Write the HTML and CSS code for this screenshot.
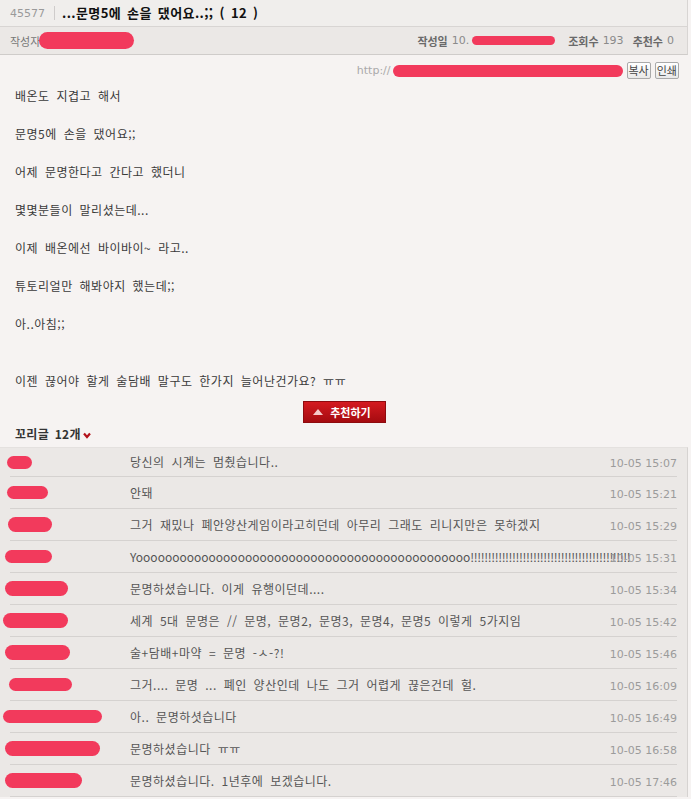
FILE: index.html
```html
<!DOCTYPE html>
<html lang="ko">
<head>
<meta charset="utf-8">
<title>...문명5에 손을 댔어요..;;</title>
<link rel="stylesheet" href="styles.css">
</head>
<body>
<div class="post">
  <div class="title-bar">
    <span class="num">45577</span>
    <span class="sep"></span>
    <h1>...문명5에 손을 댔어요..;; ( 12 )</h1>
  </div>
  <div class="meta-bar">
    <div class="author">작성자<span class="blob blob-author"></span></div>
    <div class="stats">
      <span class="stat"><b>작성일</b><span class="val">10.</span><span class="blob blob-date"></span></span>
      <span class="stat"><b>조회수</b><span class="val">193</span></span>
      <span class="stat"><b>추천수</b><span class="val">0</span></span>
    </div>
  </div>
  <div class="url-row">
    <span class="url">http://</span><span class="blob blob-url"></span>
    <button class="mini-btn">복사</button>
    <button class="mini-btn">인쇄</button>
  </div>
  <div class="content">
    <p>배온도 지겹고 해서</p>
    <p>문명5에 손을 댔어요;;</p>
    <p>어제 문명한다고 간다고 했더니</p>
    <p>몇몇분들이 말리셨는데...</p>
    <p>이제 배온에선 바이바이~ 라고..</p>
    <p>튜토리얼만 해봐야지 했는데;;</p>
    <p>아..아침;;</p>
    <p class="gap">이젠 끊어야 할게 술담배 말구도 한가지 늘어난건가요? ㅠㅠ</p>
  </div>
  <div class="recommend">
    <button class="rec-btn"><svg class="tri" width="10" height="6" viewBox="0 0 10 6"><polygon points="5,0 10,6 0,6" fill="#f6c9c9"/></svg>추천하기</button>
  </div>
  <div class="reply-head">꼬리글 12개<svg class="chev" width="8" height="7" viewBox="0 0 8 7"><polyline points="1,1.5 4,5 7,1.5" fill="none" stroke="#b3121b" stroke-width="2.2"/></svg></div>
  <ul class="replies">
    <li class="reply"><span class="name"><span class="blob" style="width:25px;margin-left:7px"></span></span><span class="text">당신의 시계는 멈췄습니다..</span><span class="date">10-05 15:07</span></li>
    <li class="reply"><span class="name"><span class="blob" style="width:41px;margin-left:7px"></span></span><span class="text">안돼</span><span class="date">10-05 15:21</span></li>
    <li class="reply"><span class="name"><span class="blob tall" style="width:44px;margin-left:8px"></span></span><span class="text">그거 재밌나 폐안양산게임이라고히던데 아무리 그래도 리니지만은 못하겠지</span><span class="date">10-05 15:29</span></li>
    <li class="reply"><span class="name"><span class="blob" style="width:47px;margin-left:5px"></span></span><span class="text yo">Yoooooooooooooooooooooooooooooooooooooooooooooo<span class="bang">!!!!!!!!!!!!!!!!!!!!!!!!!!!!!!!!!!!!!!!!!!!!!!</span></span><span class="date">10-05 15:31</span></li>
    <li class="reply"><span class="name"><span class="blob tall" style="width:63px;margin-left:5px"></span></span><span class="text">문명하셨습니다. 이게 유행이던데....</span><span class="date">10-05 15:34</span></li>
    <li class="reply"><span class="name"><span class="blob tall" style="width:65px;margin-left:3px"></span></span><span class="text">세계 5대 문명은 // 문명, 문명2, 문명3, 문명4, 문명5 이렇게 5가지임</span><span class="date">10-05 15:42</span></li>
    <li class="reply"><span class="name"><span class="blob tall" style="width:65px;margin-left:5px"></span></span><span class="text">술+담배+마약 = 문명 -ㅅ-?!</span><span class="date">10-05 15:46</span></li>
    <li class="reply"><span class="name"><span class="blob" style="width:63px;margin-left:9px"></span></span><span class="text">그거.... 문명 ... 폐인 양산인데 나도 그거 어렵게 끊은건데 헐.</span><span class="date">10-05 16:09</span></li>
    <li class="reply"><span class="name"><span class="blob" style="width:99px;margin-left:3px"></span></span><span class="text">아.. 문명하셧습니다</span><span class="date">10-05 16:49</span></li>
    <li class="reply"><span class="name"><span class="blob tall" style="width:95px;margin-left:5px"></span></span><span class="text">문명하셨습니다 ㅠㅠ</span><span class="date">10-05 16:58</span></li>
    <li class="reply"><span class="name"><span class="blob tall" style="width:77px;margin-left:5px"></span></span><span class="text">문명하셨습니다. 1년후에 보겠습니다.</span><span class="date">10-05 17:46</span></li>
  </ul>
</div>
</body>
</html>
```

FILE: styles.css
```css
html, body {
  margin: 0;
  padding: 0;
}
body {
  background: #f6f3f2;
  font-family: "Noto Sans CJK KR", "Noto Sans", sans-serif;
  color: #333;
  overflow: hidden;
}
.post {
  width: 688px;
}
.blob {
  display: inline-block;
  height: 13px;
  background: #f23a5c;
  border-radius: 7px;
  vertical-align: middle;
}
.blob.tall {
  height: 15px;
  border-radius: 8px;
}

/* title bar */
.title-bar {
  height: 27px;
  box-sizing: border-box;
  background: #f0eeec;
  border-bottom: 1px solid #d8d5d3;
  border-right: 1px solid #d8d5d3;
  display: flex;
  align-items: center;
  padding-left: 10px;
}
.num {
  font-family: "DejaVu Sans", sans-serif;
  font-size: 11px;
  color: #9a9a9a;
}
.sep {
  width: 1px;
  height: 14px;
  background: #cfcccb;
  margin: 0 7px 0 9px;
}
.title-bar h1 {
  margin: 0;
  font-size: 13px;
  font-weight: bold;
  color: #111;
  line-height: 16px;
  letter-spacing: 0.4px;
  word-spacing: 2px;
}

/* meta bar */
.meta-bar {
  height: 28px;
  box-sizing: border-box;
  background: #ebe8e6;
  border-bottom: 1px solid #cfccca;
  border-right: 1px solid #d8d5d3;
  display: flex;
  align-items: center;
  justify-content: space-between;
  padding: 0 13px 0 10px;
  font-size: 11px;
}
.author {
  color: #777;
  display: flex;
  align-items: center;
}
.blob-author {
  width: 95px;
  height: 17px;
  border-radius: 9px;
  margin-left: -1px;
}
.stats {
  display: flex;
  align-items: center;
  gap: 9px;
}
.stat {
  display: flex;
  align-items: center;
}
.stat b {
  color: #6a6a6a;
  font-weight: bold;
  margin-right: 4px;
}
.stat .val {
  font-family: "DejaVu Sans", sans-serif;
  color: #8a8a8a;
}
.blob-date {
  width: 83px;
  height: 9px;
  border-radius: 5px;
  margin-left: 3px;
  margin-right: 4px;
}

/* url row */
.url-row {
  height: 31px;
  display: flex;
  align-items: center;
  justify-content: flex-end;
  padding-right: 9px;
}
.url {
  font-family: "DejaVu Sans", sans-serif;
  font-size: 11px;
  color: #aaa;
}
.blob-url {
  width: 230px;
  height: 12px;
  border-radius: 6px;
  margin-left: 2px;
  margin-right: 2px;
}
.mini-btn {
  height: 17px;
  box-sizing: border-box;
  padding: 0 1px;
  margin: 0 0 0 2px;
  border: 1px solid #a9a9a9;
  border-radius: 2px;
  background: linear-gradient(#ffffff, #e9e9e9);
  font-family: "Noto Sans CJK KR", sans-serif;
  font-size: 11px;
  line-height: 13px;
  color: #444;
}
.mini-btn + .mini-btn {
  margin-left: 4px;
}

/* content */
.content {
  padding: 0 15px;
  font-size: 12px;
  line-height: 19px;
  color: #3a3a3a;
  letter-spacing: 0.5px;
  word-spacing: 3px;
}
.content p {
  margin: 0 0 19px;
}
.content p.gap {
  margin-top: 38px;
  margin-bottom: 0;
}

/* recommend */
.recommend {
  display: flex;
  justify-content: center;
  padding-top: 11px;
}
.rec-btn {
  width: 83px;
  height: 22px;
  box-sizing: border-box;
  border: 1px solid #8e0b0f;
  background: linear-gradient(#d41a20, #a50b10);
  color: #fff;
  font-family: "Noto Sans CJK KR", sans-serif;
  font-size: 11px;
  font-weight: bold;
  display: flex;
  align-items: center;
  justify-content: center;
  gap: 7px;
  padding: 0 4px 0 0;
}
.tri {
  display: block;
}

/* replies */
.reply-head {
  font-size: 12px;
  font-weight: bold;
  color: #333;
  line-height: 16px;
  padding: 3px 0 0 15px;
  display: flex;
  align-items: center;
  letter-spacing: 0.3px;
  word-spacing: 2px;
}
.chev {
  margin-left: 2px;
  margin-top: 2px;
}
.replies {
  list-style: none;
  margin: 5px 0 0;
  padding: 0 10px 0 0;
  background: #ebe8e6;
  border-right: 1px solid #d6d3d1;
  border-top: 1px solid #e4e1df;
}
.reply {
  display: grid;
  grid-template-columns: 130px minmax(0, 1fr) auto;
  align-items: center;
  height: 32px;
  box-sizing: border-box;
  padding-bottom: 1px;
  background: linear-gradient(#d5d2d0, #d5d2d0) no-repeat 10px 100% / calc(100% - 10px) 1px;
}
.reply:first-child {
  height: 29px;
}
.name {
  display: flex;
  align-items: center;
}
.text {
  font-size: 12px;
  color: #555;
  white-space: nowrap;
  overflow: visible;
  line-height: 16px;
  letter-spacing: 0.5px;
  word-spacing: 3px;
}
.text.yo {
  letter-spacing: 0;
}
.bang {
  letter-spacing: -0.4px;
}
.date {
  font-family: "DejaVu Sans", sans-serif;
  font-size: 11px;
  color: #9b9b9b;
  padding-top: 3px;
}
```
